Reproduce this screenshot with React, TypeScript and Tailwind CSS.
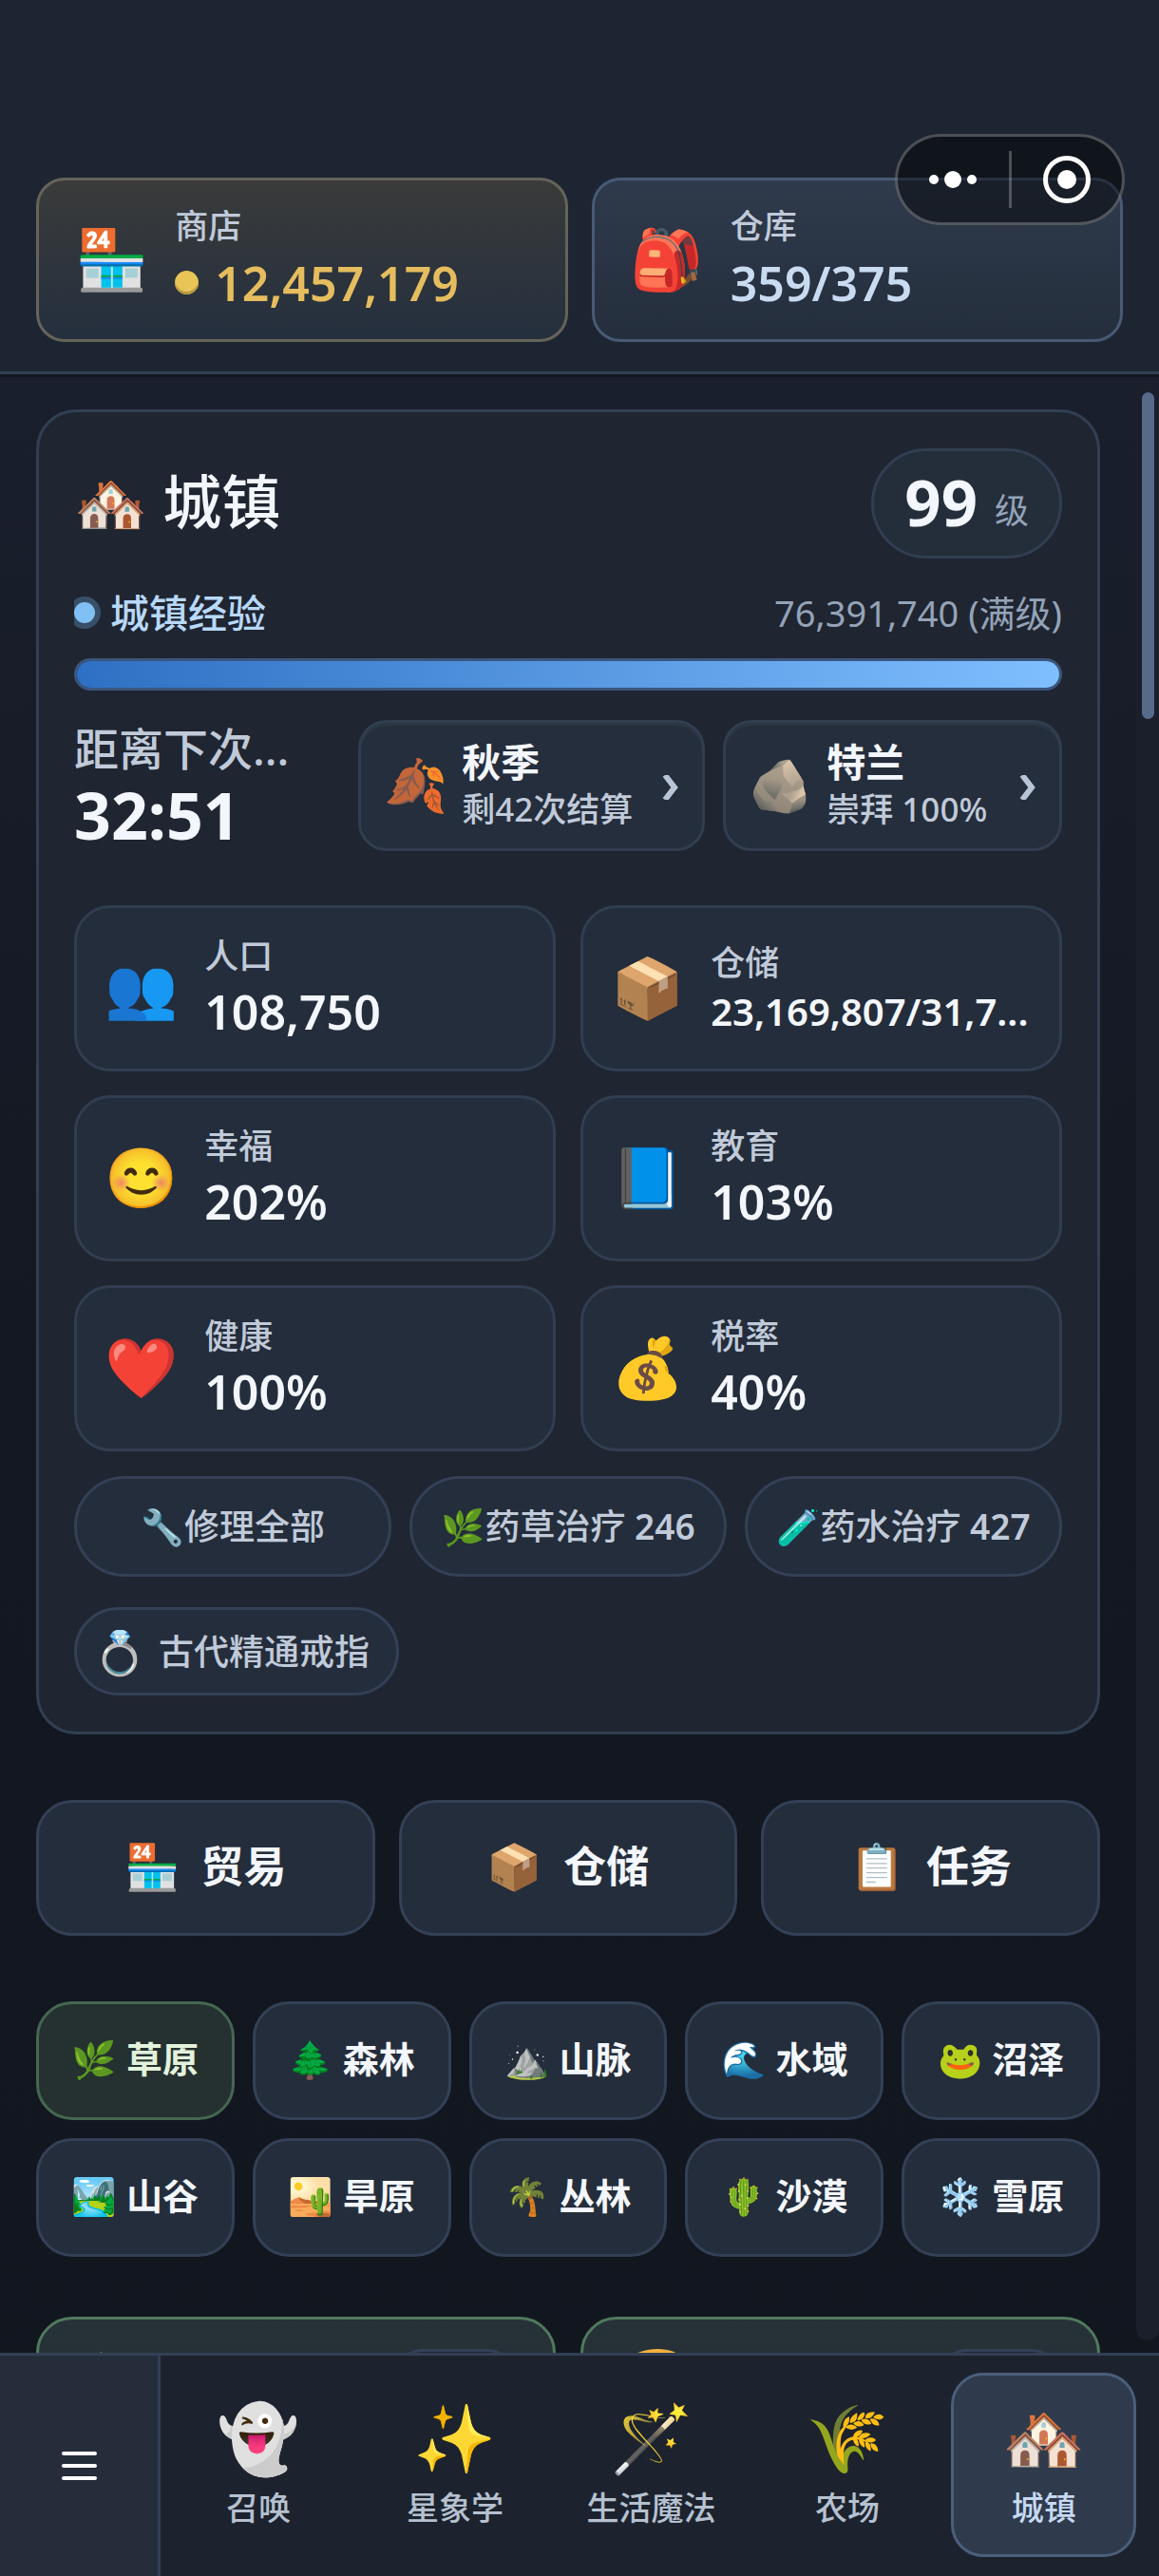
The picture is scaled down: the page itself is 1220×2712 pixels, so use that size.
import type { ReactNode } from 'react';

const FONT = 'font-[Noto_Sans,Noto_Sans_CJK_SC,Noto_Color_Emoji,sans-serif]';

function Chevron() {
  return (
    <svg viewBox="0 0 18 26" className="h-[26px] w-[18px] shrink-0" fill="none" aria-hidden="true">
      <path d="M3 0 L13 13 L3 26" stroke="#b9c5d6" strokeWidth="6" />
    </svg>
  );
}

function Resource(props: { icon: string; label: string; tone: string; children: ReactNode }) {
  return (
    <button type="button" className={`flex h-[173px] items-center gap-7 rounded-[30px] border-[3px] bg-linear-to-b pl-[38px] text-left ${props.tone}`}>
      <span className="pb-[6px] text-[62px] leading-[80px]">{props.icon}</span>
      <span className="flex flex-col">
        <span className="text-[35px] font-medium leading-[48px] text-[#c0cad9]">{props.label}</span>
        {props.children}
      </span>
    </button>
  );
}

function Info(props: { icon: string; title: string; detail: string; iconClass: string }) {
  return (
    <button type="button" className="flex h-[138px] items-center rounded-[30px] border-[3px] border-[#313e50] bg-[#252e3c] px-[24px] text-left shadow-[inset_0_3px_0_#2c3744]">
      <span className={`pb-1 text-[54px] leading-[64px] ${props.iconClass}`}>{props.icon}</span>
      <span className="ml-[15px] flex flex-col">
        <span className="text-[41px] font-semibold leading-[50px] text-[#f3f6fc]">{props.title}</span>
        <span className="whitespace-nowrap text-[35px] font-medium leading-[50px] text-[#c0cad9]">{props.detail}</span>
      </span>
      <span className="ml-auto pt-1">
        <Chevron />
      </span>
    </button>
  );
}

const stats = [
  { icon: '👥', label: '人口', value: '108,750', small: false },
  { icon: '📦', label: '仓储', value: '23,169,807/31,7...', small: true },
  { icon: '😊', label: '幸福', value: '202%', small: false },
  { icon: '📘', label: '教育', value: '103%', small: false },
  { icon: '❤️', label: '健康', value: '100%', small: false },
  { icon: '💰', label: '税率', value: '40%', small: false },
];

const actions = [
  { label: '🔧修理全部', count: '' },
  { label: '🌿药草治疗', count: ' 246' },
  { label: '🧪药水治疗', count: ' 427' },
];

const sections = [
  { icon: '🏪', label: '贸易' },
  { icon: '📦', label: '仓储' },
  { icon: '📋', label: '任务' },
];

const biomes = [
  { icon: '🌿', label: '草原' },
  { icon: '🌲', label: '森林' },
  { icon: '⛰️', label: '山脉' },
  { icon: '🌊', label: '水域' },
  { icon: '🐸', label: '沼泽' },
  { icon: '🏞️', label: '山谷' },
  { icon: '🏜️', label: '旱原' },
  { icon: '🌴', label: '丛林' },
  { icon: '🌵', label: '沙漠' },
  { icon: '❄️', label: '雪原' },
];

const tabs = [
  { icon: '👻', label: '召唤' },
  { icon: '✨', label: '星象学' },
  { icon: '🪄', label: '生活魔法' },
  { icon: '🌾', label: '农场' },
  { icon: '🏘️', label: '城镇' },
];

function Header() {
  return (
    <header className="relative shrink-0 border-b-[3px] border-[#324056] bg-[#1e2532] px-[38px] pb-[31px] pt-[187px] shadow-[0_3px_0_#121722]">
      <div className="grid grid-cols-2 gap-[25px]">
        <Resource icon="🏪" label="商店" tone="border-[#65635a] from-[#3a3b3a] to-[#242f3e]">
          <span className="flex items-center gap-[17px] text-[50px] font-semibold leading-[72px] text-[#e6bd5e]">
            <span className="size-[25px] rounded-full bg-[#e9c558] shadow-[inset_0_-3px_0_#b99a45]" />
            12,457,179
          </span>
        </Resource>
        <Resource icon="🎒" label="仓库" tone="border-[#485a74] from-[#2f3a4c] to-[#242e3c]">
          <span className="text-[50px] font-semibold leading-[72px] text-[#c9dbf1]">359/375</span>
        </Resource>
      </div>
      <div className="absolute right-[36px] top-[141px] flex h-24 w-[242px] items-center rounded-full border-[3px] border-white/25 bg-black/45">
        <button type="button" aria-label="更多" className="flex flex-1 items-center justify-center gap-[6px]">
          <span className="size-[10px] rounded-full bg-white" />
          <span className="size-[18px] rounded-full bg-white" />
          <span className="size-[10px] rounded-full bg-white" />
        </button>
        <span className="h-[60px] w-[3px] bg-white/25" />
        <button type="button" aria-label="关闭" className="flex flex-1 items-center justify-center">
          <span className="flex size-[50px] items-center justify-center rounded-full border-[5px] border-white">
            <span className="size-5 rounded-full bg-white" />
          </span>
        </button>
      </div>
    </header>
  );
}

function Town() {
  return (
    <section className="rounded-[42px] border-[3px] border-[#323f53] bg-[#1f2531] px-[37px] py-[38px]">
      <div className="flex items-center justify-between">
        <h1 className="whitespace-pre pb-1 text-[62px] font-medium leading-[80px] text-[#f3f6fc]">🏘️ 城镇</h1>
        <div className="flex h-[116px] items-center gap-[18px] rounded-full border-[3px] border-[#313e52] bg-[#242d3a] px-[32px] text-[#f3f6fc]">
          <span className="pb-1 text-[67px] font-bold leading-[80px]">99</span>
          <span className="pt-4 text-[36px] leading-[48px] text-[#94a3b8]">级</span>
        </div>
      </div>

      <div className="mt-[29px] flex h-[56px] items-center justify-between">
        <h2 className="flex items-center gap-4 overflow-hidden text-[41px] font-medium leading-[56px] text-[#b8d9f8]">
          <span className="size-[22px] rounded-full bg-[#80c0f5] shadow-[0_0_0_6px_#384f68]" />
          城镇经验
        </h2>
        <span className="text-[38px] leading-[56px] text-[#94a3b8]">76,391,740 (满级)</span>
      </div>
      <div role="progressbar" aria-label="城镇经验" aria-valuenow={100} className="mt-5 h-[34px] rounded-full border-[3px] border-[#3b567c] bg-[#161c27]">
        <div className="h-full w-full rounded-full bg-linear-to-r from-[#2e70c3] to-[#7fbfff]" />
      </div>

      <div className="mt-[31px] grid grid-cols-[minmax(0,280fr)_minmax(0,365fr)_minmax(0,357fr)] gap-[19px]">
        <div className="flex h-[138px] flex-col">
          <span className="whitespace-nowrap text-[47px] font-medium leading-[60px] text-[#c0cad9]">距离下次...</span>
          <span className="text-[68px] font-bold leading-[80px] text-[#f3f6fc]">32:51</span>
        </div>
        <Info icon="🍂" title="秋季" detail="剩42次结算" iconClass="" />
        <Info icon="🪨" title="特兰" detail="崇拜 100%" iconClass="sepia-[.35]" />
      </div>

      <dl className="mt-[57px] grid grid-cols-2 gap-x-[26px] gap-y-[25px]">
        {stats.map((s) => (
          <div key={s.label} className="flex h-[175px] items-center gap-7 rounded-[38px] border-[3px] border-[#313e51] bg-[#242d3b] pl-[29px]">
            <span className="pb-[6px] text-[62px] leading-[80px]">{s.icon}</span>
            <div>
              <dt className="text-[36px] font-medium leading-[48px] text-[#c0cad9]">{s.label}</dt>
              <dd className={s.small ? 'whitespace-nowrap text-[40px] font-semibold leading-[54px] text-[#f3f6fc]' : 'text-[50px] font-semibold leading-[68px] text-[#f3f6fc]'}>{s.value}</dd>
            </div>
          </div>
        ))}
      </dl>

      <div className="mt-[26px] grid grid-cols-3 gap-[19px]">
        {actions.map((a) => (
          <button key={a.label} type="button" className="h-[106px] whitespace-nowrap rounded-full border-[3px] border-[#334056] bg-[#242d3b] text-[37px] font-medium text-[#c0cad9]">
            {a.label}
            <span className="font-semibold">{a.count}</span>
          </button>
        ))}
      </div>
      <button type="button" className="mt-8 flex h-[93px] items-center gap-[13px] rounded-full border-[3px] border-[#334056] bg-[#242d3b] pl-[17px] pr-[28px] text-[37px] font-medium text-[#c0cad9]">
        <span className="text-[45px] leading-[56px]">💍</span>
        古代精通戒指
      </button>
    </section>
  );
}

function Ranch(props: { icon: string; label: string }) {
  return (
    <article aria-label={props.label} className="flex h-[240px] items-start justify-between rounded-[38px] border-[3px] border-[#4f7a5d] bg-linear-to-b from-[#263236] to-[#242d3b] px-[38px] pt-[31px]">
      <span className="text-[62px] leading-[60px]">{props.icon}</span>
      <span className="h-[62px] w-[130px] rounded-full border-[3px] border-[#334056] bg-[#1f2531]" />
    </article>
  );
}

export default function App() {
  return (
    <div className={`flex h-screen flex-col overflow-hidden bg-[#12161f] ${FONT}`}>
      <Header />
      <div className="flex min-h-0 flex-1 bg-linear-to-b from-[#191f2c] via-[#131822] to-[#12161f]">
        <main className="min-w-0 flex-1 overflow-hidden pl-[38px] pr-[38px] pt-[37px]">
          <Town />
          <div className="mt-[69px] grid grid-cols-3 gap-[25px]">
            {sections.map((s) => (
              <button key={s.label} type="button" className="flex h-[143px] items-center justify-center gap-[22px] rounded-[38px] border-[3px] border-[#334056] bg-[#242d3b] pb-1 text-[45px] font-semibold text-[#f3f6fc]">
                <span className="text-[47px]">{s.icon}</span>
                {s.label}
              </button>
            ))}
          </div>
          <div className="mt-[69px] grid grid-cols-5 gap-[19px]">
            {biomes.map((b, i) => (
              <button
                key={b.label}
                type="button"
                aria-pressed={i === 0}
                className={`h-[125px] whitespace-nowrap rounded-[38px] border-[3px] pb-1 text-[38px] font-semibold ${i === 0 ? 'border-[#456750] bg-[#253130] text-[#e3f2dc]' : 'border-[#334056] bg-[#242d3b] text-[#f3f6fc]'}`}
              >
                {b.icon} {b.label}
              </button>
            ))}
          </div>
          <div className="mt-[63px] grid grid-cols-2 gap-[26px]">
            <Ranch icon="🐮" label="牧场" />
            <Ranch icon="🍞" label="面包房" />
          </div>
        </main>
        <div className="mb-[13px] mt-[13px] w-6 rounded-b-xl bg-[#1a1f2b] pt-[6px]">
          <div className="mx-auto h-[344px] w-[13px] rounded-full bg-[#566a89]" />
        </div>
      </div>
      <nav className="flex h-[235px] shrink-0 border-t-[3px] border-[#324056] bg-[#1d232e]">
        <button type="button" aria-label="菜单" className="flex w-[169px] flex-col items-center justify-center gap-[9px] border-r-[3px] border-[#324056] bg-[#252d3b]">
          <span className="h-1 w-[37px] rounded-full bg-white" />
          <span className="h-1 w-[37px] rounded-full bg-white" />
          <span className="h-1 w-[37px] rounded-full bg-white" />
        </button>
        <div className="grid flex-1 grid-cols-5 gap-3 pb-5 pl-[6px] pr-6 pt-[18px]">
          {tabs.map((t) => (
            <button
              key={t.label}
              type="button"
              className={`flex flex-col items-center rounded-[34px] border-[3px] pt-5 font-medium ${t.label === '城镇' ? 'border-[#4a5f7b] bg-[#2f3b4c] text-[#c5d9f2]' : 'border-transparent text-[#b5c1d1]'}`}
            >
              <span className="text-[70px] leading-[88px]">{t.icon}</span>
              <span className="whitespace-nowrap text-[34px] leading-[62px]">{t.label}</span>
            </button>
          ))}
        </div>
      </nav>
    </div>
  );
}
